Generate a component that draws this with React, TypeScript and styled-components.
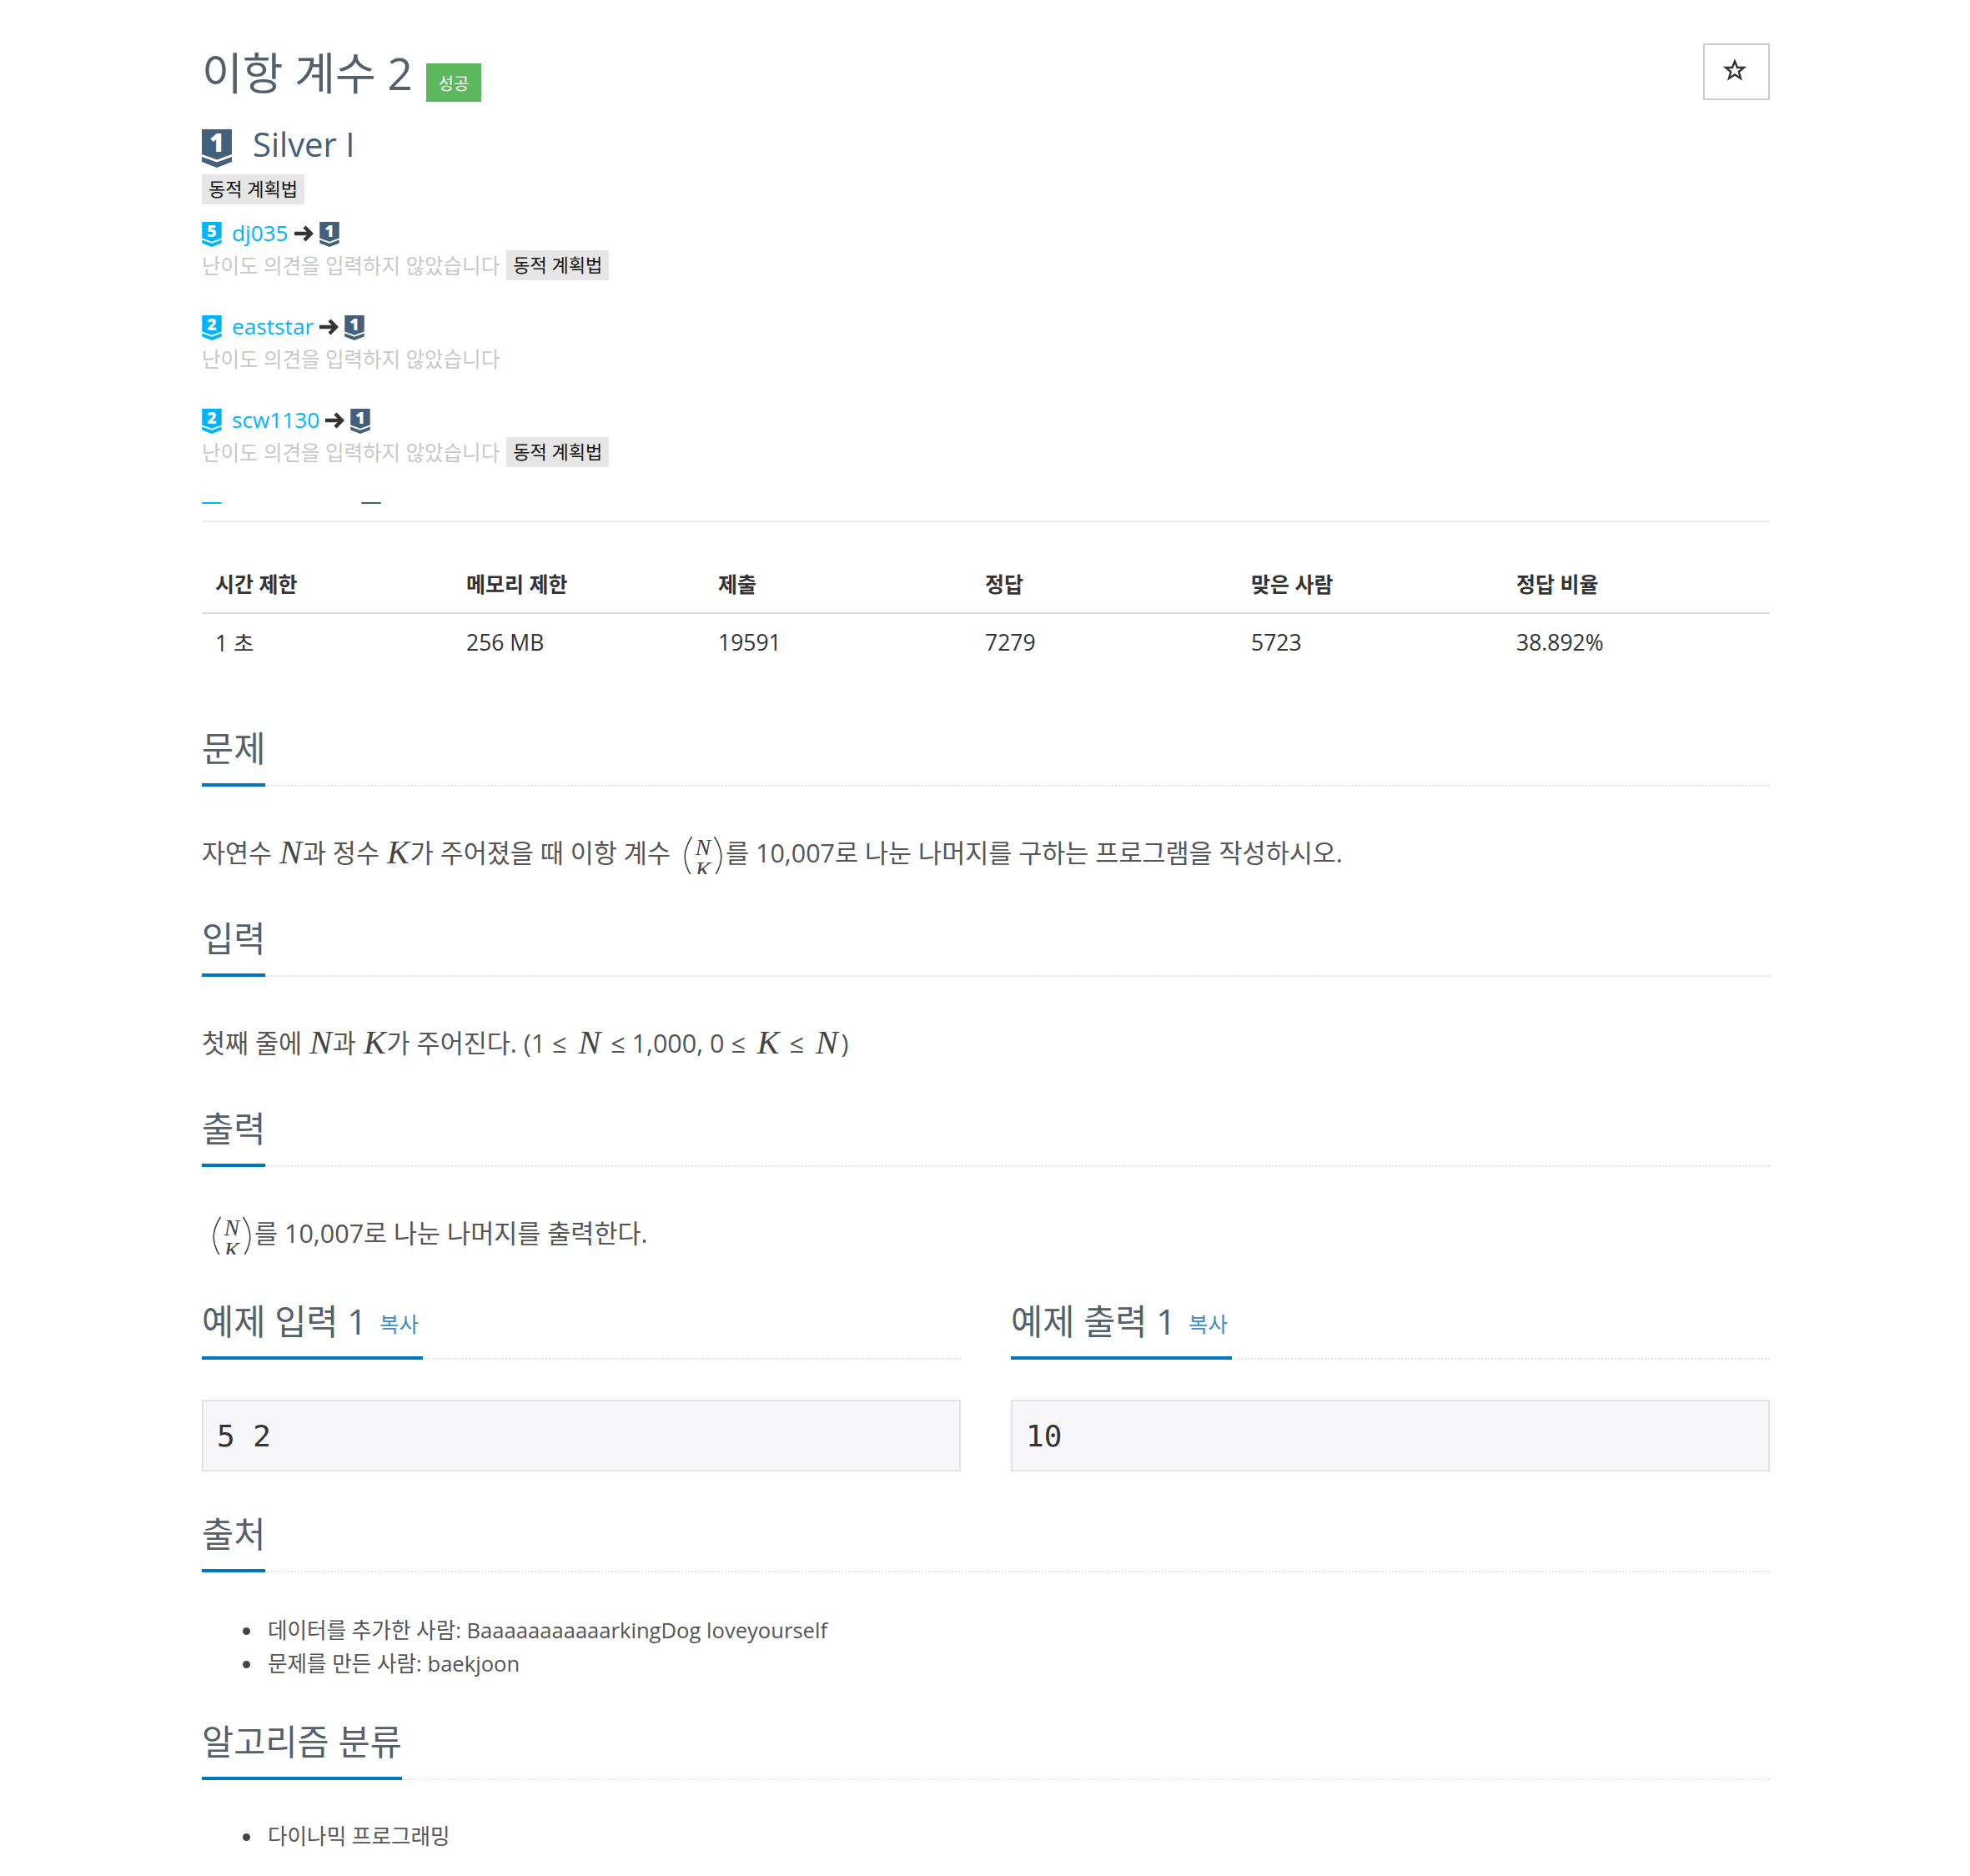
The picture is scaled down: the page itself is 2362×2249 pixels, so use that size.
import React from "react";
import styled, { createGlobalStyle } from "styled-components";

const Global = createGlobalStyle`
  html, body { margin: 0; padding: 0; background: #fff; }
  body { font-family: "Open Sans", "Noto Sans CJK KR", sans-serif; color: #555; }
`;
const Page = styled.div`width: 1880px; margin-left: 242px; padding-top: 52px; padding-bottom: 29px;`;
const Header = styled.header`display: flex; justify-content: space-between; align-items: flex-start; height: 68px;`;
const TitleWrap = styled.div`display: flex; align-items: center; height: 68px;`;
const Title = styled.h1`margin: 0; font-size: 53px; line-height: 68px; font-weight: 400; color: #555f6b; padding-top: 4px;`;
const Badge = styled.span`display: flex; align-items: center; justify-content: center; width: 66px; height: 46px; margin-left: 16px; margin-top: 26px; background: #5cb85c; color: #fff; font-size: 20px;`;
const StarButton = styled.button`width: 80px; height: 68px; border: 2px solid #ccc; background: #fff; padding: 0; display: flex; align-items: center; justify-content: center; svg { display: block; margin-left: -4px; margin-top: -4px; }`;
const TierRow = styled.div`display: flex; align-items: center; height: 46px; margin-top: 35px;`;
const TierName = styled.span`margin-left: 25px; padding-bottom: 10px; font-size: 40px; line-height: 46px; color: #435f7a;`;
const Tag = styled.span`display: inline-block; height: 36px; line-height: 34px; padding: 0 8px; background: #e6e6e6; color: #111; font-size: 22px; white-space: nowrap;`;
const TagRow = styled.div`margin-top: 8px; height: 36px;`;
const Opinions = styled.div`height: 346px; margin-top: 13px; padding-top: 8px; box-sizing: border-box; overflow: hidden;`;
const Opinion = styled.div`height: 112px;`;
const OpinionHead = styled.div`display: flex; align-items: center; height: 30px; font-size: 26.2px;`;
const Handle = styled.a`margin-left: 12px; padding-bottom: 5px; color: #00b4fc; line-height: 30px;`;
const ArrowIcon = styled.svg`margin: 0 7px 3px 6px; flex: none;`;
const OpinionBody = styled.div`display: flex; align-items: center; gap: 8px; height: 36px; margin-top: 4px; color: #c8c8c8; font-size: 24.5px;`;
const OpinionText = styled.span`padding-bottom: 2px;`;
const Rule = styled.hr`border: 0; height: 2px; background: #eee; margin: 20px 0 0;`;
const Table = styled.div`margin-top: 54px;`;
const Row = styled.div<{ $head?: boolean }>`
  display: grid; grid-template-columns: 301px 302px 320px 319px 318px 1fr;
  box-sizing: border-box;
  height: ${p => (p.$head ? "56px" : "67px")};
  align-items: center;
  ${p => (p.$head ? "border-bottom: 2px solid #ddd; padding-bottom: 17px; font-weight: 700; font-size: 25px;" : "font-size: 26.5px;")}
  color: #333;
`;
const Cell = styled.div`padding-left: 16px;`;
const Section = styled.section<{ $gap: number }>`margin-top: ${p => p.$gap}px;`;
const Heading = styled.div`display: flex; height: 74px; border-bottom: 2px dotted #e4e4e4; box-sizing: border-box;`;
const HeadingText = styled.h2`margin: 0 0 -2px; height: 74px; box-sizing: border-box; border-bottom: 4px solid #0076c0; font-weight: 400; font-size: 41.5px; line-height: 57px; color: #555f6b; white-space: nowrap;`;
const Copy = styled.a`margin-left: 15px; margin-right: 5px; font-size: 25.5px; line-height: 1; vertical-align: 3px; color: #428bca;`;
const Desc = styled.p`margin: 58px 0 0; display: flex; align-items: center; height: 42px; font-size: 30.5px; line-height: 42px; color: #555; white-space: pre;`;
const Math = styled.i`font-family: "Liberation Serif", serif; font-style: italic; font-size: 40px; margin: 0 1px 0 9px; color: #444;`;
const MathOp = styled(Math)<{ $right?: number }>`margin: 0 ${p => p.$right ?? 4}px 0 14px;`;
const Binom = styled.span<{ $left: number }>`display: inline-flex; align-items: flex-start; margin: 6px 4px 0 ${p => p.$left}px; height: 46px; overflow: hidden;`;
const BinomCol = styled.span`display: flex; flex-direction: column; align-items: center; font-family: "Liberation Serif", serif; font-style: italic; font-size: 27.5px; line-height: 27px; color: #444; width: 26px;`;
const Samples = styled.div`display: grid; grid-template-columns: 910px 910px; column-gap: 60px; margin-top: 57px;`;
const SampleBox = styled.pre`margin: 48px 0 0; height: 86px; box-sizing: border-box; background: #f7f7f9; border: 2px solid #e1e1e8; padding: 0 16px; font-family: "DejaVu Sans Mono", monospace; font-size: 36px; line-height: 84px; color: #333;`;
const List = styled.ul<{ $top: number }>`margin: ${p => p.$top}px 0 0; padding-left: 79px; list-style: none; font-size: 25.6px; line-height: 40px; color: #555;`;
const Item = styled.li`
  position: relative;
  &::before { content: ""; position: absolute; left: -30px; top: 16px; width: 9px; height: 9px; border-radius: 50%; background: #444; }
`;

const Shield = ({ n, color, size }: { n: number; color: string; size: "lg" | "sm" }) => {
  const w = size === "lg" ? 36 : 24;
  const h = size === "lg" ? 46 : 30;
  return (
    <svg width={w} height={h} viewBox="0 0 36 46" overflow="visible" style={{ flex: "none" }}>
      <path d="M0 0H36V30L18 36.5L0 30Z" fill={color} />
      <path d="M0 33L18 39.5L36 33V39L18 46L0 39Z" fill={color} />
      <text x="18" y="27" textAnchor="middle" fontFamily="'Open Sans', sans-serif" fontWeight="800" fontSize="30" fill="#fff">{n}</text>
    </svg>
  );
};

const Paren = ({ flip }: { flip?: boolean }) => (
  <svg width="10" height="50" viewBox="0 0 10 50" style={flip ? { transform: "scaleX(-1)" } : undefined}>
    <path d="M9.5 1C3 11 1.2 18 1.2 25C1.2 32 3 39 9.5 49" fill="none" stroke="#444" strokeWidth="1.6" />
  </svg>
);
const NK = ({ left }: { left: number }) => (
  <Binom $left={left}>
    <Paren />
    <BinomCol><span>N</span><span>K</span></BinomCol>
    <Paren flip />
  </Binom>
);

const Tier1 = () => <Shield n={1} color="#435f7a" size="sm" />;
const Arrow = () => (
  <ArrowIcon width="24" height="22" viewBox="0 0 24 22">
    <path d="M1 11H21M13 3L21 11L13 19" fill="none" stroke="#333" strokeWidth="4.4" />
  </ArrowIcon>
);
const opinions = [
  { h: "dj035", n: 5, tag: true },
  { h: "eaststar", n: 2, tag: false },
  { h: "scw1130", n: 2, tag: true },
  { h: "aaaa0000", n: 2, tag: false },
];

const Sec = ({ title, gap, children }: { title: string; gap: number; children: React.ReactNode }) => (
  <Section $gap={gap}>
    <Heading><HeadingText>{title}</HeadingText></Heading>
    {children}
  </Section>
);

export default function App() {
  return (
    <Page>
      <Global />
      <Header>
        <TitleWrap>
          <Title>이항 계수 2</Title>
          <Badge>성공</Badge>
        </TitleWrap>
        <StarButton aria-label="star">
          <svg width="28" height="28" viewBox="0 0 28 28">
            <path d="M14 3.5L17 11H25L18.8 16L21 24L14 19.5L7 24L9.2 16L3 11H11Z" fill="#fff" stroke="#333" strokeWidth="2.4" />
          </svg>
        </StarButton>
      </Header>
      <TierRow>
        <Shield n={1} color="#435f7a" size="lg" />
        <TierName>Silver I</TierName>
      </TierRow>
      <TagRow><Tag>동적 계획법</Tag></TagRow>
      <Opinions>
        {opinions.map(o => (
          <Opinion key={o.h}>
            <OpinionHead>
              <Shield n={o.n} color="#00b4fc" size="sm" />
              <Handle>{o.h}</Handle>
              <Arrow />
              <Tier1 />
            </OpinionHead>
            <OpinionBody>
              <OpinionText>난이도 의견을 입력하지 않았습니다</OpinionText>
              {o.tag && <Tag>동적 계획법</Tag>}
            </OpinionBody>
          </Opinion>
        ))}
      </Opinions>
      <Rule />
      <Table>
        <Row $head>
          {["시간 제한", "메모리 제한", "제출", "정답", "맞은 사람", "정답 비율"].map(t => <Cell key={t}>{t}</Cell>)}
        </Row>
        <Row>
          {["1 초", "256 MB", "19591", "7279", "5723", "38.892%"].map(t => <Cell key={t}>{t}</Cell>)}
        </Row>
      </Table>
      <Sec title="문제" gap={66}>
        <Desc>자연수<Math>N</Math>과 정수<Math>K</Math>가 주어졌을 때 이항 계수<NK left={16} />를 10,007로 나눈 나머지를 구하는 프로그램을 작성하시오.</Desc>
      </Sec>
      <Sec title="입력" gap={54}>
        <Desc>첫째 줄에<Math>N</Math>과<Math>K</Math>가 주어진다. (1 ≤<MathOp>N</MathOp> ≤ 1,000, 0 ≤<MathOp>K</MathOp> ≤<MathOp $right={4}>N</MathOp>)</Desc>
      </Sec>
      <Sec title="출력" gap={54}>
        <Desc><NK left={13} />를 10,007로 나눈 나머지를 출력한다.</Desc>
      </Sec>
      <Samples>
        <div>
          <Heading><HeadingText>예제 입력 1<Copy>복사</Copy></HeadingText></Heading>
          <SampleBox>5 2</SampleBox>
        </div>
        <div>
          <Heading><HeadingText>예제 출력 1<Copy>복사</Copy></HeadingText></Heading>
          <SampleBox>10</SampleBox>
        </div>
      </Samples>
      <Sec title="출처" gap={47}>
        <List $top={50}>
          <Item>데이터를 추가한 사람: BaaaaaaaaaaarkingDog loveyourself</Item>
          <Item>문제를 만든 사람: baekjoon</Item>
        </List>
      </Sec>
      <Sec title="알고리즘 분류" gap={45}>
        <List $top={48}><Item>다이나믹 프로그래밍</Item></List>
      </Sec>
    </Page>
  );
}
